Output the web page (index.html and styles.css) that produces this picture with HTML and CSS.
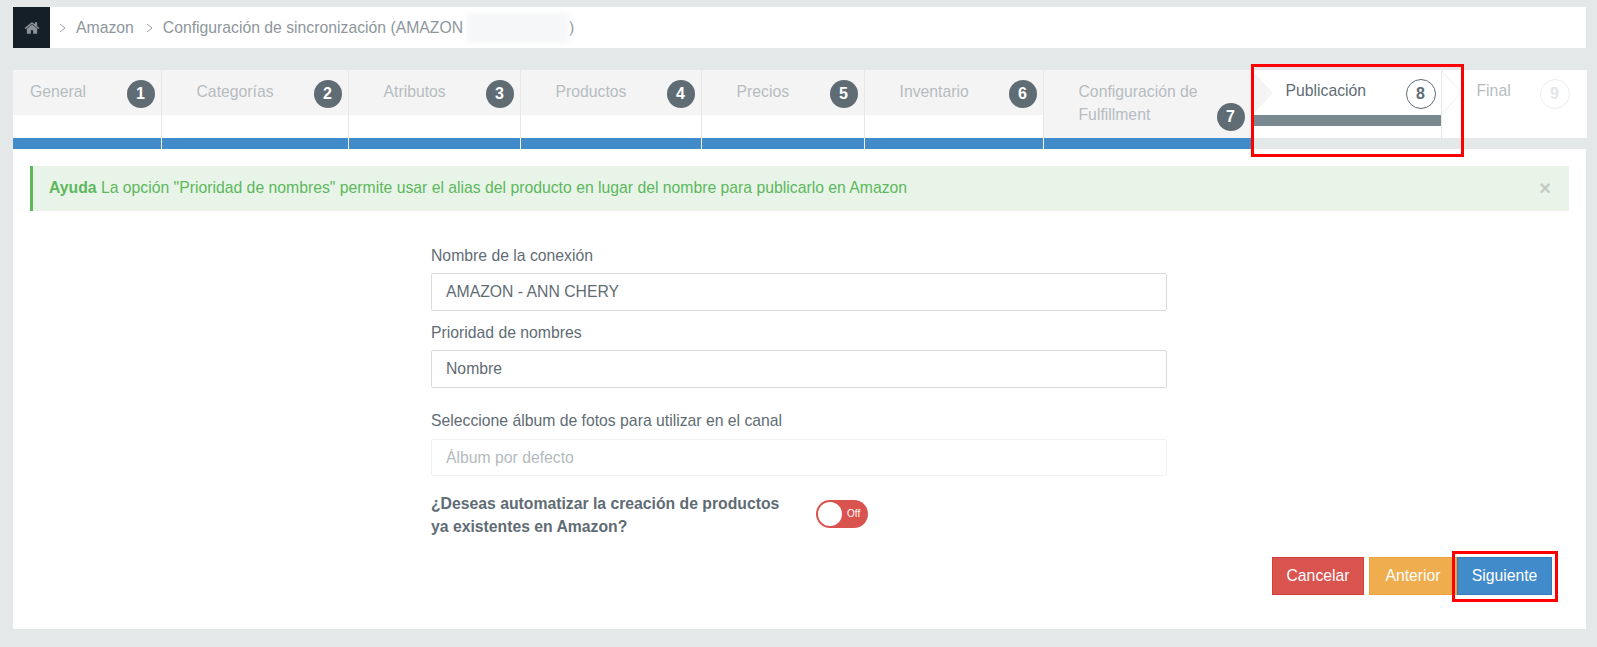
FILE: index.html
```html
<!DOCTYPE html>
<html lang="es">
<head>
<meta charset="utf-8">
<title>Configuración de sincronización</title>
<link rel="stylesheet" href="styles.css">
</head>
<body>
<nav class="crumbs">
  <a class="home" aria-label="Inicio">
    <svg width="16" height="16" viewBox="0 0 1792 1792"><path fill="#8c9396" d="M1472 992v480q0 26-19 45t-45 19h-384v-384h-256v384h-384q-26 0-45-19t-19-45v-480q0-1 .5-3t.5-3l575-474 575 474q1 2 1 6zm223-69l-62 74q-8 9-21 11h-3q-13 0-21-7l-692-577-692 577q-12 8-24 7-13-2-21-11l-62-74q-8-10-7-23.500t11-21.500l719-599q32-26 76-26t76 26l244 204v-195q0-14 9-23t23-9h192q14 0 23 9t9 23v408l219 182q10 8 11 21.500t-7 23.500z"/></svg>
  </a>
  <svg class="sep" width="8" height="10" viewBox="0 0 8 10"><path d="M1 1l5 4-5 4" fill="none" stroke="#98a0a4"/></svg><span>Amazon</span>
  <svg class="sep sep-b" width="8" height="10" viewBox="0 0 8 10"><path d="M1 1l5 4-5 4" fill="none" stroke="#98a0a4"/></svg><span>Configuración de sincronización (AMAZON</span>
  <span class="blurred"></span><span>)</span>
</nav>

<section class="wizard">
  <div class="tab t1"><div class="body"><div class="head first"><span class="label">General</span><b class="badge">1</b></div></div><div class="bar"></div></div>
  <div class="tab t2"><div class="body"><div class="head"><span class="label">Categorías</span><b class="badge">2</b></div></div><div class="bar"></div></div>
  <div class="tab t3"><div class="body"><div class="head"><span class="label">Atributos</span><b class="badge">3</b></div></div><div class="bar"></div></div>
  <div class="tab t4"><div class="body"><div class="head"><span class="label">Productos</span><b class="badge">4</b></div></div><div class="bar"></div></div>
  <div class="tab t5"><div class="body"><div class="head"><span class="label">Precios</span><b class="badge">5</b></div></div><div class="bar"></div></div>
  <div class="tab t6"><div class="body"><div class="head"><span class="label">Inventario</span><b class="badge">6</b></div></div><div class="bar"></div></div>
  <div class="tab t7"><div class="body"><div class="head tall"><span class="label">Configuración de Fulfillment</span><b class="badge">7</b></div></div><div class="bar"></div></div>
  <div class="tab t8 active"><div class="body"><div class="head"><span class="label">Publicación</span><b class="badge">8</b></div><div class="progress"></div></div><div class="bar"></div></div>
  <div class="tab t9 pending"><div class="body"><div class="head"><span class="label">Final</span><b class="badge">9</b></div></div><div class="bar"></div></div>
</section>

<main class="panel">
  <div class="alert">
    <p><strong>Ayuda</strong> La opción "Prioridad de nombres" permite usar el alias del producto en lugar del nombre para publicarlo en Amazon</p>
    <span class="close">×</span>
  </div>
  <form class="form">
    <label class="field f1"><span>Nombre de la conexión</span><input value="AMAZON - ANN CHERY"></label>
    <label class="field f2"><span>Prioridad de nombres</span><input value="Nombre"></label>
    <label class="field f3"><span>Seleccione álbum de fotos para utilizar en el canal</span><input class="soft" placeholder="Álbum por defecto"></label>
    <div class="auto">
      <strong>¿Deseas automatizar la creación de productos<br>ya existentes en Amazon?</strong>
      <span class="toggle"><i class="knob"></i><em>Off</em></span>
    </div>
  </form>
  <div class="actions">
    <button class="btn danger">Cancelar</button>
    <button class="btn warning">Anterior</button>
    <button class="btn primary">Siguiente</button>
  </div>
</main>

<div class="mark mark-tab"></div>
<div class="mark mark-btn"></div>
</body>
</html>
```
FILE: styles.css
```css
* { box-sizing: border-box; }
html, body { margin: 0; height: 647px; overflow: hidden; }
body {
  background: #e4e8e8;
  padding: 7px 11px 0 13px;
  font-family: "Liberation Sans", Arial, sans-serif;
  font-size: 15.75px;
  color: #5f6c74;
  position: relative;
}
.crumbs {
  height: 41px;
  background: #fff;
  display: flex;
  align-items: center;
  color: #8e969b;
  font-size: 15.75px;
}
.home {
  width: 37px;
  height: 41px;
  background: #141f27;
  display: flex;
  align-items: center;
  justify-content: center;
  margin-right: 9px;
}
.sep { flex: none; margin-right: 9px; }
.sep-b { margin-left: 12px; }
.blurred {
  width: 102px;
  height: 30px;
  margin: 0 0 0 4px;
  background: #f6f7f8;
  filter: blur(2px);
}

.wizard {
  display: grid;
  grid-template-columns: 148.500px 187px 172px 181px 163px 179px 208px 190px 145px;
  margin-top: 22px;
  height: 79px;
}
.tab { display: flex; flex-direction: column; position: relative; }
.body { height: 68px; background: #fff; border-right: 1px solid #e4e8e8; }
.t9 .body { border-right: 0; }
.head {
  height: 45px;
  background: #f4f4f5;
  display: flex;
  justify-content: space-between;
  align-items: flex-start;
  padding: 10px 6px 0 35px;
  color: #b6bcc0;
}
.head.first { padding-left: 17px; }
.head.tall { height: 68px; padding-right: 6px; }
.label { line-height: 23px; width: 130px; }
.tall .label { width: 140px; line-height: 23px; margin-top: 0; }
.badge {
  flex: none;
  width: 28px;
  height: 28px;
  border-radius: 50%;
  background: #5f6c74;
  color: #fff;
  font-size: 16px;
  display: flex;
  align-items: center;
  justify-content: center;
}
.tall .badge { margin-top: 23px; }
.bar { height: 11px; background: #428bca; border-right: 1px solid #fff; }
.t7 .bar { border-right: 0; }
.active .head { background: #fff; color: #5f6c74; padding: 9px 5px 0 34px; }
.active .badge, .pending .badge {
  width: 30px;
  height: 30px;
  background: #fff;
  border: 1px solid #5f6c74;
  color: #5f6c74;
}
.active .progress { height: 11px; background: #7a8890; }
.active .bar, .pending .bar { background: #e4e8e8; border: 0; }
.pending .head { background: #fff; padding: 9px 17px 0 35px; }
.pending .badge { border-color: #eceeef; color: #e4e6e8; }
.active::before {
  content: "";
  position: absolute;
  left: 0;
  top: 0;
  border-left: 21px solid #f4f4f5;
  border-top: 23px solid transparent;
  border-bottom: 22px solid transparent;
}
.pending::before {
  content: "";
  position: absolute;
  left: 0;
  top: 0;
  width: 20px;
  height: 45px;
  background: #e9ebec;
  clip-path: polygon(0 0, 100% 50%, 0 100%, 0 97%, 97% 50%, 0 3%);
}

.panel {
  height: 480px;
  background: #fff;
  padding: 17px;
  display: flex;
  flex-direction: column;
}
.alert {
  height: 45px;
  background: #e9f4e9;
  border-left: 3px solid #5cb85c;
  color: #5cb85c;
  display: flex;
  align-items: center;
  justify-content: space-between;
  padding: 0 18px 0 16px;
  width: 1539px;
}
.alert p { margin: 0 0 2px; }
.close { font-size: 20px; font-weight: bold; color: #c2cbc3; }

.form {
  width: 736px;
  margin: 35px 0 0 401px;
}
.field { display: block; }
.field span { display: block; line-height: 20px; }
.field input {
  display: block;
  width: 100%;
  height: 38px;
  margin-top: 7px;
  border: 1px solid #d9dcde;
  border-radius: 2px;
  padding: 0 14px;
  background: #fff;
  font: 15.75px "Liberation Sans", Arial, sans-serif;
  color: #5f6c74;
  outline: 0;
}
.f2 { margin-top: 12px; }
.f2 input { margin-top: 7px; }
.f3 { margin-top: 23px; }
.f3 input { height: 37px; margin-top: 8px; }
.soft { border-color: #eef0f1 !important; }
.soft::placeholder { color: #b5babd; opacity: 1; }
.auto {
  display: flex;
  align-items: center;
  margin-top: 16px;
  line-height: 23px;
}
.auto strong { width: 385px; }
.toggle {
  width: 52px;
  height: 28px;
  margin-bottom: 3px;
  background: #d9534f;
  border-radius: 14px;
  position: relative;
  display: block;
}
.knob {
  position: absolute;
  left: 2px;
  top: 2px;
  width: 24px;
  height: 24px;
  background: #fff;
  border-radius: 50%;
}
.toggle em {
  position: absolute;
  left: 31px;
  top: 7px;
  font: normal 10px/14px "Liberation Sans", sans-serif;
  color: #fff;
}
.actions {
  display: flex;
  justify-content: flex-end;
  margin: 19px 17px 0 0;
  gap: 5px;
}
.btn {
  height: 38px;
  border: 1px solid;
  font: 15.75px "Liberation Sans", Arial, sans-serif;
  color: #fff;
  padding: 0;
}
.danger { width: 92px; background: #d9534f; border-color: #d43f3a; }
.warning { width: 88px; background: #f0ad4e; border-color: #eea236; margin-right: -5px; }
.primary { width: 95px; background: #428bca; border-color: #357ebd; }

.mark { position: absolute; border: 3px solid #f00; }
.mark-tab { left: 1251px; top: 64px; width: 213px; height: 93px; }
.mark-btn { left: 1452px; top: 551px; width: 106px; height: 51px; }
```
